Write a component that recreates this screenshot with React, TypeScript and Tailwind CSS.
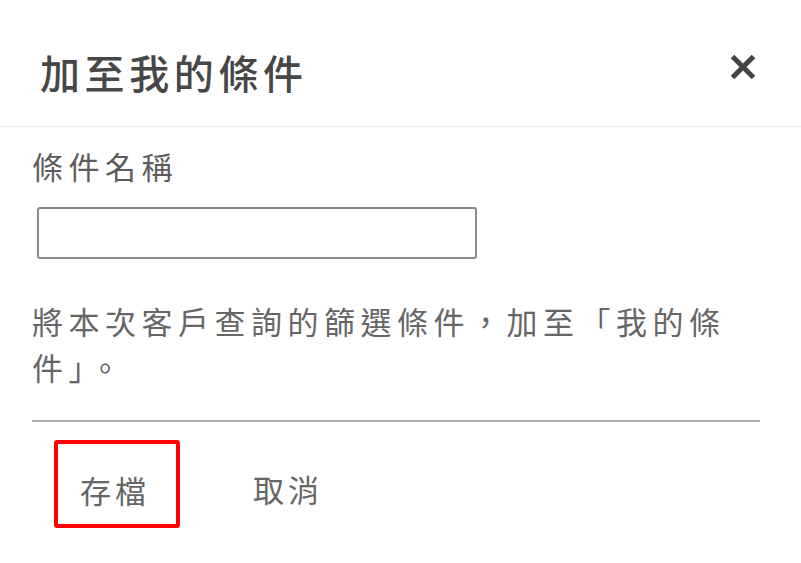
const font = { fontFamily: '"Noto Sans CJK TC", "Noto Sans", sans-serif' };

const CloseIcon = () => (
  <svg width="28" height="28" viewBox="0 0 28 28" className="text-[#444]">
    <path d="M3.5 3.5 L24.5 24.5 M24.5 3.5 L3.5 24.5" stroke="currentColor" strokeWidth="5" strokeLinecap="butt" />
  </svg>
);

export default function App() {
  return (
    <div className="w-[801px] h-[563px] bg-white overflow-hidden" style={font}>
      <div className="flex justify-between items-start pl-[40px] pr-[44px] pt-[52px] pb-[34px] border-b border-[#ececec]">
        <h1 className="text-[40px] leading-[40px] font-medium tracking-[4.6px] text-[#474747]">加至我的條件</h1>
        <button className="mt-[1px]">
          <CloseIcon />
        </button>
      </div>

      <div className="px-[32px] pt-[23px]">
        <label className="block text-[31px] leading-[32px] tracking-[5.5px] text-[#5c5c5c]">條件名稱</label>
        <input
          type="text"
          className="block mt-[25px] ml-[5px] w-[440px] h-[52px] border-2 border-[#8a8a8a] rounded-[3px] outline-none"
        />
        <p className="mt-[39px] w-[712px] text-[31px] leading-[46px] tracking-[5.5px] text-[#666]">
          將本次客戶查詢的篩選條件，加至「我的條件」。
        </p>
        <div className="mt-[30px] w-[728px] h-[2px] bg-[#b0b0b0]" />

        <div className="flex mt-[18px]">
          <button className="ml-[22px] w-[126px] h-[88px] flex items-center justify-center pt-[10px] pr-[4px] border-4 border-[#ff0000] rounded-[3px] text-[31px] leading-[31px] tracking-[4px] text-[#666]">
            存檔
          </button>
          <button className="ml-[47px] w-[126px] h-[88px] flex items-center justify-center pt-[8px] pr-[4px] border-4 border-transparent text-[31px] leading-[31px] tracking-[4px] text-[#666]">
            取消
          </button>
        </div>
      </div>
    </div>
  );
}
